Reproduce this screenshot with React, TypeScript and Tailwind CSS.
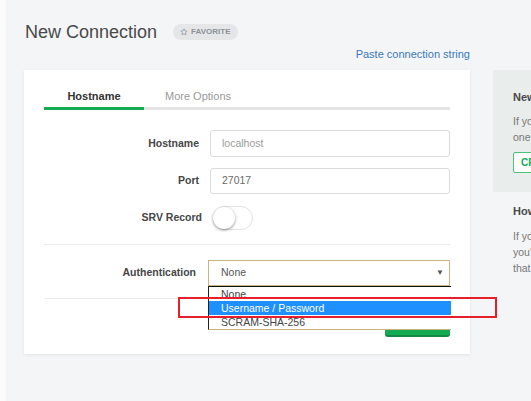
import type React from "react";

const FONT = { fontFamily: '"Liberation Sans", Arial, sans-serif' };

const Label: React.FC<React.PropsWithChildren<{ className?: string }>> = ({ children, className }) => (
  <div className={"text-right text-[10.5px] font-bold text-[#464646] " + (className ?? "")}>{children}</div>
);

const TextInput: React.FC<{ value: string; muted?: boolean; className?: string }> = ({ value, muted, className }) => (
  <div
    className={
      "flex items-center w-[240px] border border-[#dcdcdc] rounded-[3px] pl-[11px] text-[10.5px] " +
      (muted ? "text-[#9a9a9a] " : "text-[#6b6b6b] ") +
      (className ?? "")
    }
  >
    {value}
  </div>
);

const AuthSelect: React.FC = () => (
  <div className="relative">
    <div className="flex items-center justify-between w-[242px] h-[26px] border border-[#c9b47f] pl-[12px] pr-[5px] text-[10.5px] text-[#555]">
      <span>None</span>
      <span className="text-[8px] text-[#555]">▼</span>
    </div>
    <div className="absolute left-0 top-[26px] z-10 w-[243px] h-[44px] bg-white border-l border-t border-b border-l-[#222] border-t-[#111] border-b-[#c9b47f] text-[10.5px] text-[#444]">
      <div className="h-[14px] leading-[14px] pl-[12px]">None</div>
      <div className="h-[14px] leading-[14px] pl-[12px] bg-[#1e90ff] text-white">Username / Password</div>
      <div className="h-[14px] leading-[14px] pl-[12px]">SCRAM-SHA-256</div>
    </div>
  </div>
);

const Card: React.FC = () => (
  <div className="w-[446px] h-[284px] bg-white shadow-[0_1px_3px_rgba(0,0,0,0.08)] px-[20px] pt-[19px]">
    <div className="flex text-[11px] leading-[14px]">
      <div className="w-[100px] text-center font-bold text-[#333] pb-[4px] border-b-[3px] border-[#13aa52]">Hostname</div>
      <div className="flex-1 pl-[21px] text-[#999] pb-[4px] border-b-[3px] border-[#e4e4e4]">More Options</div>
    </div>
    <div className="flex items-center mt-[20px]">
      <Label className="w-[155px]">Hostname</Label>
      <TextInput value="localhost" muted className="ml-[11px] h-[27px]" />
    </div>
    <div className="flex items-center mt-[11px]">
      <Label className="w-[155px]">Port</Label>
      <TextInput value="27017" className="ml-[11px] h-[26px]" />
    </div>
    <div className="flex items-center mt-[12px]">
      <Label className="w-[158px]">SRV Record</Label>
      <div className="ml-[11px] w-[40px] h-[24px] rounded-full border border-[#e2e2e2] bg-white relative">
        <div className="absolute left-[-1px] top-[0px] w-[22px] h-[22px] rounded-full bg-white shadow-[0_1px_3px_rgba(0,0,0,0.45)]" />
      </div>
    </div>
    <div className="mt-[14px] border-t border-[#ebebeb]" />
    <div className="flex items-center mt-[15px]">
      <Label className="w-[152px]">Authentication</Label>
      <div className="ml-[12px]">
        <AuthSelect />
      </div>
    </div>
    <div className="mt-[12px] border-t border-[#ebebeb]" />
    <div className="flex justify-end mt-[14px]">
      <div className="w-[65px] h-[24px] bg-[#13aa52] rounded-[3px] border-b-2 border-[#0e8a41]" />
    </div>
  </div>
);

const SidePanel: React.FC = () => (
  <div className="w-[240px] pt-[70px] text-[10.5px]">
    <div className="bg-[#e9edeb] pl-[20px] pt-[20px] pb-[20px] h-[122px]">
      <div className="text-[11px] font-bold text-[#494949] leading-[14px] whitespace-nowrap">New to Compass and don't have a cluster?</div>
      <div className="mt-[9px] text-[#777] leading-[16px] whitespace-nowrap">
        <div>If you don't already have a cluster, you can create</div>
        <div>one for free using MongoDB Atlas.</div>
      </div>
      <div className="mt-[7px] inline-flex items-center h-[21px] border border-[#4cc17c] rounded-[2px] px-[7px] text-[10px] font-bold text-[#13aa52] bg-white whitespace-nowrap">
        CREATE FREE CLUSTER
      </div>
    </div>
    <div className="pl-[20px] pt-[12px]">
      <div className="text-[11px] font-bold text-[#494949] leading-[14px] whitespace-nowrap">How do I find my connection string in Atlas?</div>
      <div className="mt-[10px] text-[#777] leading-[16px] whitespace-nowrap">
        <div>If you have an Atlas cluster, go to the Cluster view.</div>
        <div>you'll find the "Connect" button for the cluster</div>
        <div>that you wish to connect to.</div>
      </div>
    </div>
  </div>
);

export default function App() {
  return (
    <div style={FONT} className="relative flex w-full h-[401px] overflow-hidden bg-[#f4f5f7]">
      <div className="w-[6px] shrink-0 bg-[#fbfbfb]" />
      <div className="flex flex-1 gap-[23px] pl-[18px]">
        <div className="w-[446px] shrink-0">
          <div className="h-[70px] pt-[21px]">
            <div className="flex items-center gap-[16px] pl-[1px]">
              <h1 className="text-[18px] leading-[22px] text-[#494949]">New Connection</h1>
              <div className="flex items-center gap-[3px] h-[16px] px-[7px] rounded-full bg-[#e4e6e8] text-[8px] font-bold text-[#8e9297]">
                <svg width="8" height="8" viewBox="0 0 24 24" fill="none" stroke="#8e9297" strokeWidth="2.2" strokeLinejoin="round">
                  <path d="M12 2.5l2.9 6.1 6.6.8-4.9 4.6 1.3 6.5L12 17.3l-5.9 3.2 1.3-6.5-4.9-4.6 6.6-.8z" />
                </svg>
                FAVORITE
              </div>
            </div>
            <div className="mt-[4px] text-right text-[11px] leading-[14px] text-[#3a78b8]">Paste connection string</div>
          </div>
          <Card />
        </div>
        <SidePanel />
      </div>
      <div className="absolute left-[178px] top-[297px] w-[319px] h-[21px] border-2 border-[#e6202b] z-20" />
    </div>
  );
}
